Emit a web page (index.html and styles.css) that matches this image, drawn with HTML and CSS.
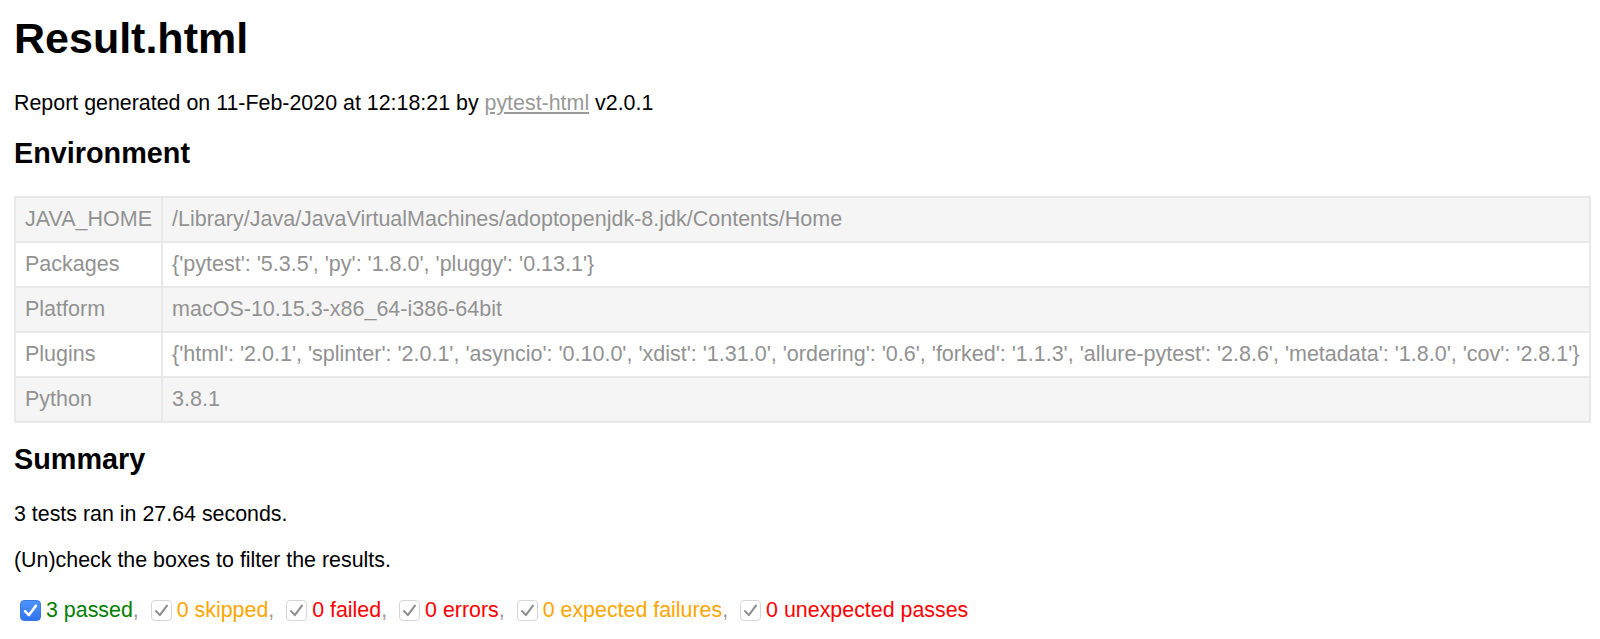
FILE: index.html
```html
<!DOCTYPE html>
<html>
<head>
<meta charset="utf-8">
<title>Test Report</title>
<link rel="stylesheet" href="styles.css">
</head>
<body>
<h1 class="title">Result.html</h1>
<p class="generated">Report generated on 11-Feb-2020 at 12:18:21 by <a class="link" href="#">pytest-html</a> v2.0.1</p>
<h2 class="section">Environment</h2>
<table class="env">
  <tr><td class="key">JAVA_HOME</td><td>/Library/Java/JavaVirtualMachines/adoptopenjdk-8.jdk/Contents/Home</td></tr>
  <tr><td class="key">Packages</td><td>{'pytest': '5.3.5', 'py': '1.8.0', 'pluggy': '0.13.1'}</td></tr>
  <tr><td class="key">Platform</td><td>macOS-10.15.3-x86_64-i386-64bit</td></tr>
  <tr><td class="key">Plugins</td><td>{'html': '2.0.1', 'splinter': '2.0.1', 'asyncio': '0.10.0', 'xdist': '1.31.0', 'ordering': '0.6', 'forked': '1.1.3', 'allure-pytest': '2.8.6', 'metadata': '1.8.0', 'cov': '2.8.1'}</td></tr>
  <tr><td class="key">Python</td><td>3.8.1</td></tr>
</table>
<h2 class="section summary-head">Summary</h2>
<p class="text">3 tests ran in 27.64 seconds.</p>
<p class="text">(Un)check the boxes to filter the results.</p>
<div class="filters">
<span class="cb cb-on"><svg viewBox="0 0 20 20" width="21" height="21"><path d="M4.8 10.6 L8.4 14.4 L15.2 5.4" fill="none" stroke="#fff" stroke-width="2.4" stroke-linecap="round" stroke-linejoin="round"/></svg></span><span class="passed">3 passed</span>,
<span class="cb cb-off"><svg viewBox="0 0 20 20" width="21" height="21"><path d="M4.8 10.6 L8.4 14.4 L15.2 5.4" fill="none" stroke="#8f8f8f" stroke-width="2" stroke-linecap="round" stroke-linejoin="round"/></svg></span><span class="skipped">0 skipped</span>,
<span class="cb cb-off"><svg viewBox="0 0 20 20" width="21" height="21"><path d="M4.8 10.6 L8.4 14.4 L15.2 5.4" fill="none" stroke="#8f8f8f" stroke-width="2" stroke-linecap="round" stroke-linejoin="round"/></svg></span><span class="failed">0 failed</span>,
<span class="cb cb-off"><svg viewBox="0 0 20 20" width="21" height="21"><path d="M4.8 10.6 L8.4 14.4 L15.2 5.4" fill="none" stroke="#8f8f8f" stroke-width="2" stroke-linecap="round" stroke-linejoin="round"/></svg></span><span class="failed">0 errors</span>,
<span class="cb cb-off"><svg viewBox="0 0 20 20" width="21" height="21"><path d="M4.8 10.6 L8.4 14.4 L15.2 5.4" fill="none" stroke="#8f8f8f" stroke-width="2" stroke-linecap="round" stroke-linejoin="round"/></svg></span><span class="skipped">0 expected failures</span>,
<span class="cb cb-off"><svg viewBox="0 0 20 20" width="21" height="21"><path d="M4.8 10.6 L8.4 14.4 L15.2 5.4" fill="none" stroke="#8f8f8f" stroke-width="2" stroke-linecap="round" stroke-linejoin="round"/></svg></span><span class="failed">0 unexpected passes</span>
</div>
</body>
</html>
```
FILE: styles.css
```css
html, body {
  background: #fff;
}
body {
  margin: 13px 8px 13px 14px;
  font-family: "Liberation Sans", Arial, Helvetica, sans-serif;
  font-size: 21.4px;
  color: #999;
}
.title {
  margin: 0;
  font-size: 43px;
  line-height: 50px;
  font-weight: bold;
  color: #000;
}
.generated {
  margin: 28px 0 0;
  line-height: 25px;
  color: #000;
}
.link {
  color: #999;
  text-decoration: underline;
}
.section {
  margin: 21px 0 26px;
  font-size: 28.8px;
  line-height: 33px;
  font-weight: bold;
  color: #000;
}
.summary-head {
  margin-top: 20px;
}
.env {
  border-collapse: collapse;
  white-space: nowrap;
  color: #929292;
  font-size: 21.5px;
}
.env td {
  padding: 9px;
  line-height: 25px;
  border: 2px solid #e8e8e8;
}
.env tr:nth-child(odd) {
  background: #f5f5f5;
}
.text {
  margin: 21px 0 0;
  line-height: 25px;
  color: #000;
}
.summary-head + .text {
  margin-top: 26px;
}
.filters {
  margin-top: 25px;
  line-height: 25px;
  color: #999;
  white-space: nowrap;
}
.cb {
  display: inline-block;
  box-sizing: border-box;
  width: 21px;
  height: 21px;
  margin: 0 5px 0 6px;
  border-radius: 4px;
  vertical-align: -4px;
  overflow: hidden;
}
.cb svg {
  display: block;
  margin: -1px;
}
.cb-on {
  background: linear-gradient(#4d95f9, #2f74ee);
  border: 1px solid #3a7be8;
}
.cb-off {
  background: #fff;
  border: 1px solid #d6d6d6;
}
.passed {
  color: green;
}
.skipped {
  color: orange;
}
.failed {
  color: red;
}
```
